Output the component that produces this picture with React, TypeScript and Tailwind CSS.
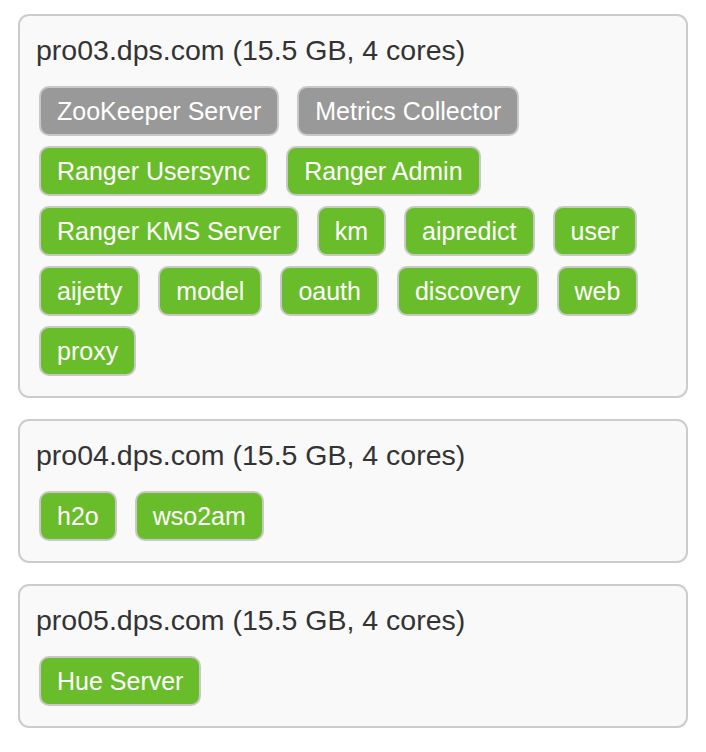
const hosts = [
  {
    name: 'pro03.dps.com (15.5 GB, 4 cores)',
    services: [
      { label: 'ZooKeeper Server', stopped: true },
      { label: 'Metrics Collector', stopped: true },
      { label: 'Ranger Usersync' },
      { label: 'Ranger Admin' },
      { label: 'Ranger KMS Server' },
      { label: 'km' },
      { label: 'aipredict' },
      { label: 'user' },
      { label: 'aijetty' },
      { label: 'model' },
      { label: 'oauth' },
      { label: 'discovery' },
      { label: 'web' },
      { label: 'proxy' },
    ],
  },
  {
    name: 'pro04.dps.com (15.5 GB, 4 cores)',
    services: [{ label: 'h2o' }, { label: 'wso2am' }],
  },
  {
    name: 'pro05.dps.com (15.5 GB, 4 cores)',
    services: [{ label: 'Hue Server' }],
  },
] as { name: string; services: { label: string; stopped?: boolean }[] }[]

export default function App() {
  return (
    <div className="min-h-screen bg-white px-[18px] pt-[14px] flex flex-col gap-[21px] font-['Liberation_Sans',Arial,sans-serif]">
      {hosts.map(h => (
        <div key={h.name} className="rounded-[11px] border-2 border-[#cccccc] bg-[#f9f9f9] px-4 pt-[18px] pb-[20px]">
          <div className="text-[28.5px] leading-[32px] text-[#333333]">{h.name}</div>
          <div className="mt-[20px] pl-[3px] flex flex-wrap gap-x-[18px] gap-y-[10px]">
            {h.services.map(s => (
              <span
                key={s.label}
                className={
                  s.stopped
                    ? 'rounded-[10px] border-2 border-[#c8c8c8] bg-[#999999] px-[16px] py-[9px] text-[25px] leading-[28px] text-white'
                    : 'rounded-[10px] border-2 border-[#c8c8c8] bg-[#6abd2a] px-[16px] py-[9px] text-[25px] leading-[28px] text-white'
                }
              >
                {s.label}
              </span>
            ))}
          </div>
        </div>
      ))}
    </div>
  )
}
